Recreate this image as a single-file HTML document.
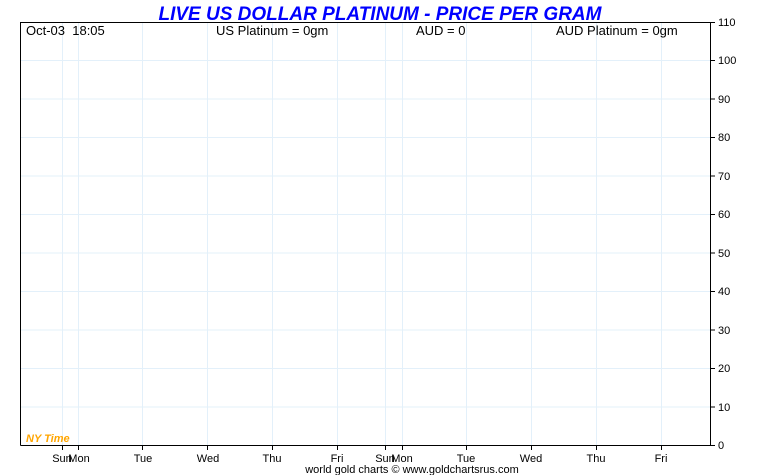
<!DOCTYPE html>
<html><head><meta charset="utf-8"><style>
html,body{margin:0;padding:0;background:#fff;width:760px;height:475px;overflow:hidden}
svg{display:block;font-family:"Liberation Sans",sans-serif}
</style></head><body>
<svg width="760" height="475" xmlns="http://www.w3.org/2000/svg">
<text x="380" y="20" text-anchor="middle" font-size="19" font-weight="bold" font-style="italic" fill="#0000ff">LIVE US DOLLAR PLATINUM - PRICE PER GRAM</text>
<g stroke="#e3f0fa" stroke-width="1">
<line x1="20" x2="710" y1="60.5" y2="60.5"/><line x1="20" x2="710" y1="99" y2="99"/>
<line x1="20" x2="710" y1="137.5" y2="137.5"/><line x1="20" x2="710" y1="176" y2="176"/>
<line x1="20" x2="710" y1="214.5" y2="214.5"/><line x1="20" x2="710" y1="253" y2="253"/>
<line x1="20" x2="710" y1="291.5" y2="291.5"/><line x1="20" x2="710" y1="330" y2="330"/>
<line x1="20" x2="710" y1="368.5" y2="368.5"/><line x1="20" x2="710" y1="407" y2="407"/>
<line x1="62.5" x2="62.5" y1="22" y2="445"/><line x1="78.5" x2="78.5" y1="22" y2="445"/>
<line x1="142.5" x2="142.5" y1="22" y2="445"/><line x1="207.5" x2="207.5" y1="22" y2="445"/>
<line x1="272.5" x2="272.5" y1="22" y2="445"/><line x1="337.5" x2="337.5" y1="22" y2="445"/>
<line x1="385.5" x2="385.5" y1="22" y2="445"/><line x1="402.5" x2="402.5" y1="22" y2="445"/>
<line x1="466.5" x2="466.5" y1="22" y2="445"/><line x1="531.5" x2="531.5" y1="22" y2="445"/>
<line x1="596.5" x2="596.5" y1="22" y2="445"/><line x1="661.5" x2="661.5" y1="22" y2="445"/>
</g>
<path d="M20.5 445.5V22.5H710.5V445.5H20.5" fill="none" stroke="#000" stroke-width="1"/>
<g stroke="#000">
<line x1="62.5" x2="62.5" y1="445" y2="450"/><line x1="78.5" x2="78.5" y1="445" y2="450"/>
<line x1="142.5" x2="142.5" y1="445" y2="450"/><line x1="207.5" x2="207.5" y1="445" y2="450"/>
<line x1="272.5" x2="272.5" y1="445" y2="450"/><line x1="337.5" x2="337.5" y1="445" y2="450"/>
<line x1="385.5" x2="385.5" y1="445" y2="450"/><line x1="402.5" x2="402.5" y1="445" y2="450"/>
<line x1="466.5" x2="466.5" y1="445" y2="450"/><line x1="531.5" x2="531.5" y1="445" y2="450"/>
<line x1="596.5" x2="596.5" y1="445" y2="450"/><line x1="661.5" x2="661.5" y1="445" y2="450"/>
<line x1="710" x2="715" y1="22.5" y2="22.5"/><line x1="710" x2="715" y1="60.5" y2="60.5"/>
<line x1="710" x2="715" y1="99" y2="99"/><line x1="710" x2="715" y1="137.5" y2="137.5"/>
<line x1="710" x2="715" y1="176" y2="176"/><line x1="710" x2="715" y1="214.5" y2="214.5"/>
<line x1="710" x2="715" y1="253" y2="253"/><line x1="710" x2="715" y1="291.5" y2="291.5"/>
<line x1="710" x2="715" y1="330" y2="330"/><line x1="710" x2="715" y1="368.5" y2="368.5"/>
<line x1="710" x2="715" y1="407" y2="407"/><line x1="710" x2="715" y1="445.5" y2="445.5"/>
</g>
<g font-size="11" fill="#000">
<text x="718" y="26">110</text><text x="718" y="64">100</text><text x="718" y="103">90</text>
<text x="718" y="141">80</text><text x="718" y="180">70</text><text x="718" y="218">60</text>
<text x="718" y="257">50</text><text x="718" y="295">40</text><text x="718" y="334">30</text>
<text x="718" y="372">20</text><text x="718" y="411">10</text><text x="718" y="449">0</text>
</g>
<g font-size="13" fill="#000">
<text x="26" y="35">Oct-03 &#160;18:05</text>
<text x="216" y="35">US Platinum = 0gm</text>
<text x="416" y="35">AUD = 0</text>
<text x="556" y="35">AUD Platinum = 0gm</text>
</g>
<text x="26" y="442" font-size="11" font-weight="bold" font-style="italic" fill="#ffa500">NY Time</text>
<g font-size="11" fill="#000" text-anchor="middle">
<text x="62" y="462">Sun</text><text x="79" y="462">Mon</text><text x="143" y="462">Tue</text>
<text x="208" y="462">Wed</text><text x="272" y="462">Thu</text><text x="337" y="462">Fri</text>
<text x="385" y="462">Sun</text><text x="402" y="462">Mon</text><text x="466" y="462">Tue</text>
<text x="531" y="462">Wed</text><text x="596" y="462">Thu</text><text x="661" y="462">Fri</text>
<text x="412" y="473">world gold charts © www.goldchartsrus.com</text>
</g>
</svg>
</body></html>
